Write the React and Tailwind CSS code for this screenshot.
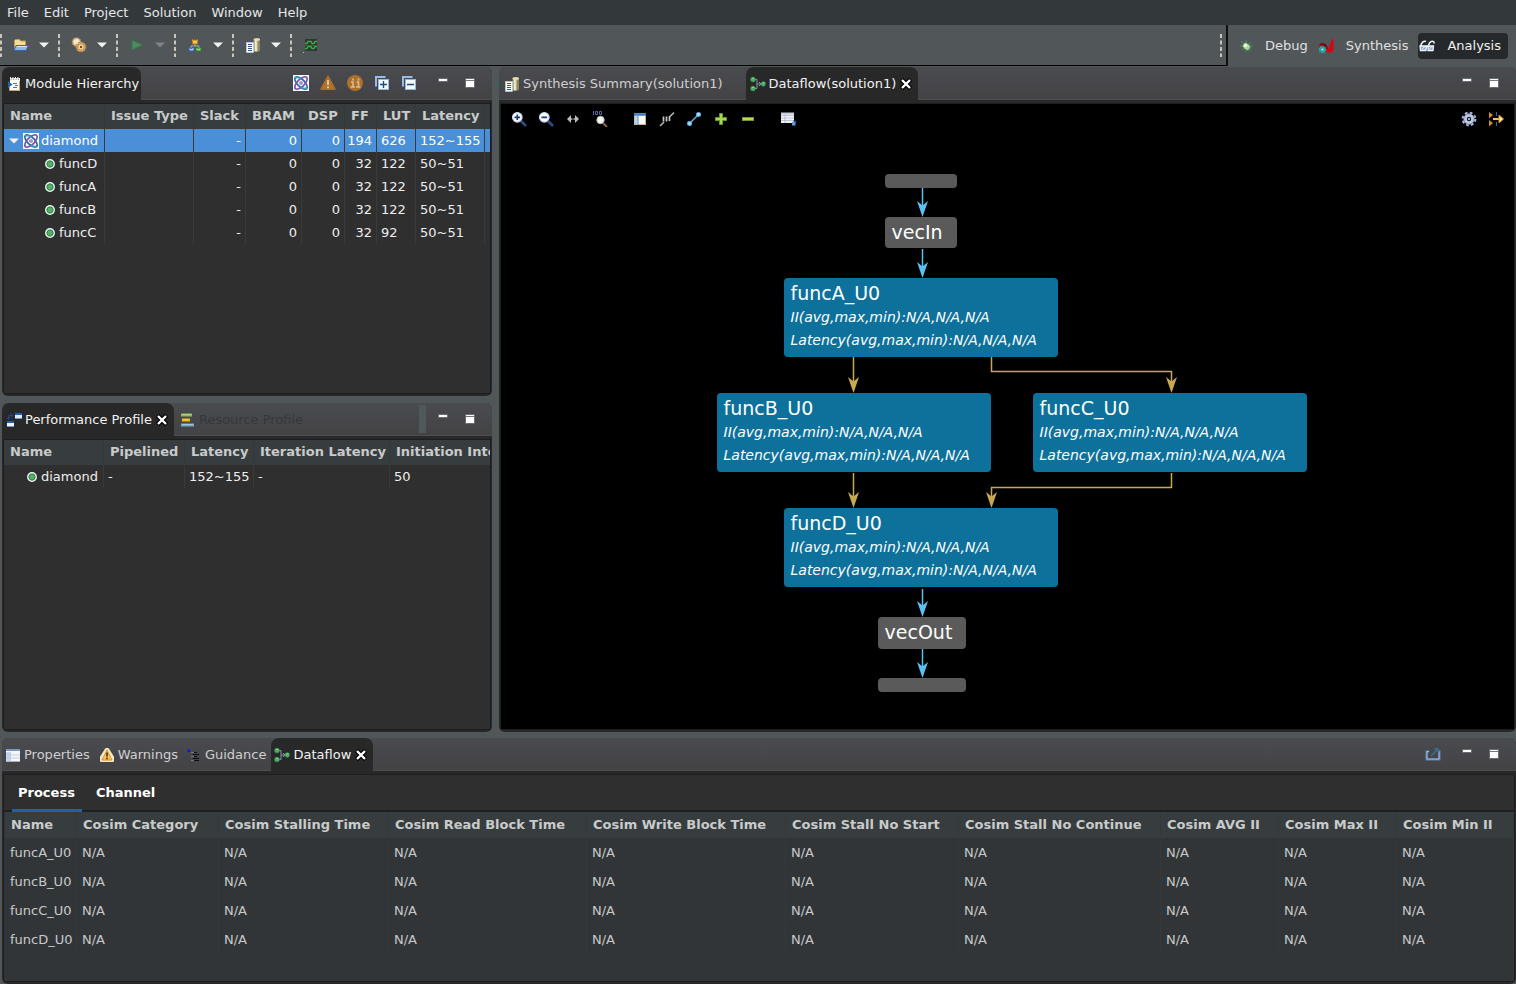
import React from "react";

/* ---------- icons ---------- */

function Svg({ children, className = "" }) {
  return (
    <svg viewBox="0 0 16 16" className={"block size-4 shrink-0 " + className} aria-hidden="true">
      {children}
    </svg>
  );
}

const FolderIcon = () => (
  <Svg>
    <path d="M1.500 12.500V3.500l1-1h4l1 1.500h5v4" fill="#f5dc9a" stroke="#c89a4a" />
    <path d="M3 8.500h12.500l-2.500 5H1z" fill="#8db4ec" stroke="#3b62b0" />
    <path d="M4 9.500h9.500" stroke="#dbe8fb" />
  </Svg>
);
const GearsIcon = () => (
  <Svg>
    <circle cx="5.500" cy="5" r="4" fill="#e8cfa0" stroke="#c89a68" strokeWidth="1.600" strokeDasharray="1.400 1" />
    <circle cx="5.500" cy="5" r="2.800" fill="#f7ead0" />
    <circle cx="10" cy="10" r="4.600" fill="#e8c080" stroke="#c08a40" strokeWidth="1.800" strokeDasharray="1.500 1.100" />
    <circle cx="10" cy="10" r="3.200" fill="#f3dcae" stroke="#a87030" strokeWidth=".7" />
    <circle cx="10" cy="10" r="1.200" fill="#6a4a20" />
  </Svg>
);
const PlayIcon = () => (
  <Svg>
    <path d="M3 3l10.500 5L3 13z" fill="#4b8b5c" stroke="#3c744b" />
  </Svg>
);
const TreeIcon = () => (
  <Svg>
    <path d="M8 6v3M4 11V9h8v2" stroke="#a8aeb5" fill="none" />
    <rect x="5.500" y="3.500" width="5" height="3.500" fill="#f5c860" stroke="#b07818" />
    <path d="M5 2l2 1.500L8 2l1 1.500L11 2v2H5z" fill="#e09a20" />
    <path d="M2 10l2 1.500L7 10v4H2z" fill="#a8c8f5" stroke="#315aa0" />
    <path d="M9 10l2.500 1.500L14 10v4H9z" fill="#8fdc7c" stroke="#2b7b2b" />
  </Svg>
);
const ReportIcon = () => (
  <Svg>
    <path d="M8.500 2.500c0-2 6.500-2 6.500 0v11c0 1.500-6.500 1.500-6.500 0z" fill="#8c875e" />
    <path d="M9.500 2.500h3v12h-3z" fill="#d9d5ae" />
    <path d="M10.300 3h1v11h-1z" fill="#f6f4e0" />
    <ellipse cx="11.750" cy="2.500" rx="3.250" ry="1.300" fill="#e3dfbd" />
    <rect x="1.500" y="5.500" width="7" height="10" fill="#fff" stroke="#c5d3e0" strokeWidth=".6" />
    <path d="M3 7.500h4M3 9.500h4M3 11.500h4M3 13.500h4" stroke="#235a9c" />
  </Svg>
);
const WaveIcon = () => (
  <Svg>
    <rect x="2" y="2" width="12" height="12" fill="#303633" />
    <path d="M2 6.500h2l1-2h3l1 2h2l1-2h2M2 11.500h2l1-2h3l1 2h2l1-2h2" fill="none" stroke="#2fb545" strokeWidth="1.300" />
    <path d="M2 8.500h12" stroke="#1f6e33" />
    <path d="M0 15.500h1" stroke="#b5b5b5" />
  </Svg>
);
const BugIcon = () => (
  <Svg>
    <path d="M3 3l10 10M13 4L4 12M1.500 8h13M8 2v12" stroke="#3d8d78" strokeWidth="1" />
    <ellipse cx="8.500" cy="8.500" rx="4.200" ry="3.300" transform="rotate(40 8.500 8.500)" fill="#b4d88a" stroke="#3b7660" strokeWidth=".8" />
    <circle cx="7.500" cy="7.500" r="1.700" fill="#eef7d8" />
  </Svg>
);
const SynthesisIcon = () => (
  <Svg>
    <path d="M1 8c1-4 6-4 9 2 2-1 2-7 5.500-10v12.500c-2 3-6 2.500-8 .5-1-4-4-5-6.500-5z" fill="#d00a12" />
    <path d="M1 8c1-4 6-4 8 0l1 3-3-1c-1-2-4-3-6-2z" fill="#750b12" />
    <circle cx="4.500" cy="11.500" r="3" fill="#189fa0" stroke="#27b5b5" strokeWidth="1.600" strokeDasharray="1.300 1" />
    <circle cx="4.500" cy="11.500" r="1.100" fill="#c8f5ef" />
  </Svg>
);
const GlassesIcon = () => (
  <Svg>
    <path d="M1.500 8.500C2.500 4 5 2.500 7 3.500M9.500 7.500c1-4 3.500-5 5.500-3.500v1.500M7 9c1-1 1.500-1 2 0" fill="none" stroke="#f2f6fb" strokeWidth="1.500" />
    <path d="M1 8h6.500L7 12.500H1.500zM9 8h5.500L14 12.500H9z" fill="#86a7d8" stroke="#f5f8fc" strokeWidth="1.300" />
    <path d="M3 11l3-2.500M10.500 11l2.500-2.500" stroke="#e7effb" />
  </Svg>
);
const NotesIcon = () => (
  <Svg>
    <rect x="4" y="2" width="10" height="13" fill="#f9f9f5" />
    <path d="M3.500 8v6.500h10V5" fill="none" stroke="#c8a76a" />
    <path d="M4.500 3h9" stroke="#343b44" strokeDasharray="1 1.500" />
    <path d="M4.500 1v2M7 1v2M9.500 1v2M12 1v2" stroke="#f4f4f4" />
    <path d="M7 7.500h4M9 9.500h3M7 11.500h4" stroke="#4b74ad" />
    <path d="M2 5l4.500 3.500L2 12z" fill="#2464a8" />
  </Svg>
);
const AtomIcon = () => (
  <Svg>
    <rect width="16" height="16" fill="#fbfbff" />
    <g fill="none" strokeWidth="1.700">
      <ellipse cx="8" cy="8" rx="8" ry="3.600" transform="rotate(45 8 8)" stroke="#2868ac" />
      <ellipse cx="8" cy="8" rx="8" ry="3.600" transform="rotate(-45 8 8)" stroke="#7651ae" />
      <path d="M2.500 3.500C3 1.500 6 2.500 8 4.500M13.500 12.500c-.5 2-3.500 1-5.500-1" stroke="#38a4b5" />
    </g>
    <circle cx="8" cy="8" r="1.800" fill="#7b55b8" />
    <circle cx="8" cy="8" r=".7" fill="#fff" />
  </Svg>
);
const OrangeWarnIcon = () => (
  <Svg>
    <path d="M8 1.200l7 13H1z" fill="#b3742a" stroke="#a96d26" strokeWidth="1.500" strokeLinejoin="round" />
    <path d="M8 5v5M8 11.200v2" stroke="#dcc9b2" strokeWidth="1.800" />
  </Svg>
);
const OrangeInfoIcon = () => (
  <Svg>
    <circle cx="8" cy="8" r="8" fill="#ae7029" />
    <path d="M4 7h2v5M9.500 7h2v5M3.500 12h4.500M9 12h4.500M6 3.500v2M11.500 3.500v2" stroke="#d5bb9a" strokeWidth="1.600" fill="none" />
  </Svg>
);
const BoxIcon = ({ plus }) => (
  <Svg>
    <path d="M2 11.500v-9.500h9.500" fill="none" stroke="#9abbe5" strokeWidth="2" />
    <rect x="4.500" y="4.500" width="10" height="10" fill="#f5faff" stroke="#8fb5e3" />
    <path d={plus ? "M6 9.500h7M9.500 6v7" : "M6 9.500h7"} stroke="#19477f" strokeWidth="1.400" />
  </Svg>
);
const MinIcon = () => (
  <Svg>
    <rect x="3.500" y="3.500" width="9" height="3" fill="#fff" stroke="#6b6b6d" />
  </Svg>
);
const MaxIcon = () => (
  <Svg>
    <rect x="3.500" y="3.500" width="9" height="9" fill="#fff" stroke="#6b6b6d" />
    <path d="M4 5.500h8" stroke="#77777a" />
  </Svg>
);
const PerfIcon = () => (
  <Svg>
    <path d="M2.500 7V3.500h4M5 1.500l2 2-2 2M1 5.500l1.500 2 1.500-2" fill="none" stroke="#1c489b" />
    <rect x="9" y="1" width="7" height="6" fill="#dceafa" />
    <rect x="9" y="1" width="7" height="2" fill="#245fb5" />
    <rect x="1" y="9" width="7" height="6" fill="#eef5fc" />
    <rect x="1" y="9" width="7" height="2" fill="#245fb5" />
    <path d="M9 6.500h7M1 14.500h7" stroke="#7299c8" />
  </Svg>
);
const ResourceIcon = () => (
  <Svg>
    <path d="M1 3h11" stroke="#91ba58" strokeWidth="3" />
    <path d="M2 8h8" stroke="#f2b318" strokeWidth="3" />
    <path d="M1 13h13" stroke="#76a6d0" strokeWidth="3" />
    <path d="M2 2.500h9M3 7.500h6M2 12.500h11" stroke="#d7dfc8" strokeOpacity=".5" />
  </Svg>
);
const FlowIcon = () => (
  <Svg>
    <path d="M4 3.500h3v9H4M7 8h4" fill="none" stroke="#8793a5" />
    <path d="M9 6l2 2-2 2" fill="none" stroke="#aab8c8" strokeWidth=".8" />
    <g fill="#4fae65" stroke="#2f8046" strokeWidth=".5">
      <circle cx="3" cy="3.500" r="2.500" />
      <circle cx="3" cy="12.500" r="2.500" />
      <circle cx="13.300" cy="8" r="2.400" />
    </g>
    <path d="M2 2.500h2M2 11.500h2M12.500 7h2" stroke="#8bd19a" />
  </Svg>
);
const PropsIcon = () => (
  <Svg>
    <rect x="1" y="2" width="14" height="12.500" fill="#f3f6fa" />
    <path d="M1 3h14" stroke="#7d97c2" strokeWidth="2" />
    <path d="M1 5h4v9.500H1z" fill="#c6d8ee" />
    <path d="M1 8h14M1 11h14M5.500 5v9M1 14.500h14" stroke="#a9bbd4" strokeWidth=".6" />
  </Svg>
);
const WarningIcon = () => (
  <Svg>
    <path d="M7 2h2l5 8v4H2v-4z" fill="#fffdf5" stroke="#f6e6c2" strokeWidth="2" strokeLinejoin="round" />
    <path d="M8 3l5 10H3z" fill="#f8c35a" stroke="#d78a1c" strokeLinejoin="round" />
    <path d="M8 5.500v4M8 10.500v1.700" stroke="#42301b" strokeWidth="1.600" />
  </Svg>
);
const GuidanceIcon = () => (
  <Svg>
    <path d="M1 3.500h1.500V2H4v3H1z" fill="#1414e8" />
    <path d="M5.500 5v10" stroke="#555" strokeDasharray="1 1" />
    <path d="M5 5.500h6M7 7.500h6M6 9.500h5M7 11.500h6M6 13.500h7" stroke="#0c0c0c" strokeWidth="1.200" />
    <path d="M5 5.500h3M5 9.500h3M5 13.500h3" stroke="#777" />
  </Svg>
);
const ZoomIcon = ({ plus }) => (
  <Svg>
    <path d="M10 10l5 5" stroke="#2d4d82" strokeWidth="2.600" />
    <circle cx="6.300" cy="6.300" r="4.700" fill="#fff" stroke="#c9d8f0" strokeWidth="1.400" />
    <path d={plus ? "M3.500 6.300h5.600M6.300 3.500v5.600" : "M3.500 6.300h5.600"} stroke="#153a74" strokeWidth="1.700" />
  </Svg>
);
const FitWidthIcon = () => (
  <Svg>
    <path d="M2 8l4-4v8zM14 8l-4-4v8z" fill="#bcbcbc" />
    <path d="M5 8h2.500M8.500 8H11" stroke="#bcbcbc" strokeWidth="1.500" />
  </Svg>
);
const Zoom100Icon = () => (
  <Svg>
    <path d="M1.500 0v4M3.500 .5h2v3h-2zM7.500 .5h2v3h-2z" fill="none" stroke="#4c6b9b" />
    <circle cx="8.500" cy="9" r="3.700" fill="#f5f5ef" stroke="#bbb" />
    <path d="M11 12l4 4" stroke="#8f6350" strokeWidth="2" />
  </Svg>
);
const LayoutIcon = () => (
  <Svg>
    <rect x="2.500" y="2.500" width="11" height="11" fill="#f8fbff" stroke="#c9b580" />
    <path d="M2 3.500h12" stroke="#3b7dca" strokeWidth="2.500" />
    <path d="M2.500 5h3v8h-3z" fill="#b7d2f0" />
    <path d="M6 5v9" stroke="#5187bd" />
  </Svg>
);
const SlashBarsIcon = () => (
  <Svg>
    <path d="M1 15l4-4M11 5.500l4-4" stroke="#b9b9b9" strokeWidth="1.500" />
    <path d="M4.500 5.500v5M7.500 5.500v5M10.500 5v5" stroke="#c7c7c7" strokeWidth="1.700" />
  </Svg>
);
const ConnectIcon = () => (
  <Svg>
    <path d="M4 12l8-8" stroke="#63b3e5" strokeWidth="1.500" />
    <g fill="#b9e0f8" stroke="#56a9df" strokeWidth="1.200">
      <circle cx="3.500" cy="12.500" r="2" />
      <circle cx="12.500" cy="3.500" r="2" />
    </g>
  </Svg>
);
const PlusIcon = () => (
  <Svg>
    <path d="M6.500 2.500h3v4h4v3h-4v4h-3v-4h-4v-3h4z" fill="#a5d84b" stroke="#62952a" />
  </Svg>
);
const MinusIcon = () => (
  <Svg>
    <rect x="2.500" y="6.500" width="11" height="3" fill="#b9dc4d" stroke="#789630" />
  </Svg>
);
const TableIcon = () => (
  <Svg>
    <rect x="1" y="2" width="13" height="10" fill="#f0f1f5" />
    <path d="M1 4.500h13M1 7h13M1 9.500h13M5 2v10" stroke="#b3bacb" strokeWidth=".8" />
    <rect x="1" y="1.500" width="13" height="2" fill="#c9ccd8" />
    <rect x="12" y="11" width="3.500" height="3.500" fill="#5c9bde" />
    <path d="M13 10h2.500v2" fill="none" stroke="#2f5f9c" />
  </Svg>
);
const CogIcon = () => (
  <Svg>
    <circle cx="8" cy="8" r="6.300" fill="none" stroke="#a5b5d6" strokeWidth="2.200" strokeDasharray="2.700 2.250" />
    <circle cx="8" cy="8" r="5.200" fill="#bccae5" stroke="#8093b8" strokeWidth=".8" />
    <circle cx="8" cy="8" r="2.200" fill="#15181e" />
    <path d="M7 8h2M8 7v2" stroke="#d4def0" />
  </Svg>
);
const MergeIcon = () => (
  <Svg>
    <path d="M1 1l4 3-4 3.500zM1 9l4 3-4 3.500z" fill="#d88a24" />
    <path d="M8.500 1v4M8.500 11v4" stroke="#49638b" />
    <path d="M5 8h7" stroke="#f4c16b" strokeWidth="2" />
    <path d="M11 4l4.500 4-4.500 4z" fill="#fff0c2" stroke="#d98b22" />
  </Svg>
);
const ExportIcon = () => (
  <Svg>
    <path d="M4 5.500H1.500v8h13v-8H13" fill="none" stroke="#5f83bd" strokeWidth="2" />
    <path d="M4 5.500H2v7.500h12V5.500" fill="none" stroke="#b2cbee" strokeWidth=".8" />
    <path d="M6 10l6-6M9.500 3h3.500v3.500" fill="none" stroke="#39709b" strokeWidth="1.400" />
  </Svg>
);
const CloseIcon = () => (
  <svg viewBox="0 0 12 12" className="block size-3" aria-hidden="true">
    <path d="M1.500 1.500l9 9M10.500 1.500l-9 9" stroke="#000" strokeWidth="4.500" />
    <path d="M2 2l8 8M10 2l-8 8" stroke="#fff" strokeWidth="2.400" />
  </svg>
);
const Caret = ({ dim }) => (
  <svg viewBox="0 0 10 6" className="block h-[6px] w-[10px] shrink-0" aria-hidden="true">
    <path d="M0 .5h10L5 5.500z" fill={dim ? "#7f8385" : "#f2f2f2"} />
  </svg>
);
const Dot = () => (
  <svg viewBox="0 0 10 10" className="block size-[10px] shrink-0" aria-hidden="true">
    <circle cx="5" cy="5" r="4.200" fill="#58ad6c" stroke="#f2f7f2" strokeWidth="1.500" />
    <circle cx="5" cy="5" r="3.100" fill="none" stroke="#2a7a41" strokeWidth=".8" />
  </svg>
);

/* ---------- shared pieces ---------- */

function Handle() {
  return (
    <svg viewBox="0 0 2 24" className="block h-6 w-[2px] shrink-0" aria-hidden="true">
      <path d="M1 1v23" stroke="#c9c5bd" strokeWidth="2" strokeDasharray="4 2.500" />
    </svg>
  );
}

function IconButton({ label, children, className = "" }) {
  return (
    <button type="button" aria-label={label} className={"shrink-0 " + className}>
      {children}
    </button>
  );
}

function Panel({ tabs, actions, children, className = "" }) {
  return (
    <section className={"flex min-h-0 min-w-0 flex-col overflow-hidden rounded-md bg-[#282828] " + className}>
      <header className="flex h-[33px] shrink-0 items-stretch border-b border-[#4d4d4f] bg-linear-to-b from-[#4a4b4f] to-[#434346]">
        {tabs}
        <div className="ml-auto flex items-center gap-[11px] pr-[14px]">{actions}</div>
      </header>
      <div className="mx-px mt-[3px] mb-[2px] flex min-h-0 flex-1 flex-col overflow-hidden border border-[#1c1e1f] bg-[#2f2f2f]">
        {children}
      </div>
    </section>
  );
}

function Tab({ icon, label, active, close, className = "" }) {
  return (
    <div
      className={
        "flex shrink-0 items-center whitespace-nowrap " +
        (active ? "-mb-px rounded-t-lg bg-[#282828] text-[#f2f2f2] " : "pt-px text-[#cfcfcf] ") +
        className
      }
    >
      <button type="button" className="flex items-center gap-[3px]">
        {icon}
        {label}
      </button>
      {close && (
        <IconButton label={"Close " + label} className="ml-1">
          <CloseIcon />
        </IconButton>
      )}
    </div>
  );
}

const WindowButtons = ({ className = "" }) => (
  <div className={"flex gap-[11px] " + className}>
    <IconButton label="Minimize"><MinIcon /></IconButton>
    <IconButton label="Maximize"><MaxIcon /></IconButton>
  </div>
);

/* ---------- top bars ---------- */

function MenuBar() {
  return (
    <nav className="flex h-[25px] shrink-0 items-center gap-[15px] bg-[#33393b] px-[7px] text-[#e6e6e6]">
      {["File", "Edit", "Project", "Solution", "Window", "Help"].map((m) => (
        <button type="button" key={m}>{m}</button>
      ))}
    </nav>
  );
}

const TOOLS = [
  ["Open project", <FolderIcon />],
  ["Settings", <GearsIcon />],
  ["Run", <PlayIcon />, true],
  ["Hierarchy", <TreeIcon />],
  ["Reports", <ReportIcon />],
];

function ToolBar() {
  return (
    <div className="flex h-[41px] shrink-0 bg-[#515658]">
      <div className="flex flex-1 items-center border-b border-black">
        {TOOLS.map(([label, icon, dim]) => (
          <div key={label} className="flex w-[58px] items-center">
            <Handle />
            <IconButton label={label} className="ml-[11px]">{icon}</IconButton>
            <IconButton label={label + " options"} className="ml-[10px]"><Caret dim={dim} /></IconButton>
          </div>
        ))}
        <Handle />
        <IconButton label="Waveform" className="ml-[11px]"><WaveIcon /></IconButton>
        <div className="mr-1 ml-auto"><Handle /></div>
      </div>
      <div className="flex items-center border-l-2 border-[#101010] pr-2 text-[#e0e0e0]">
        <button type="button" className="ml-[10px] flex items-center gap-[11px]"><BugIcon />Debug</button>
        <button type="button" className="ml-[10px] flex items-center gap-[12px]"><SynthesisIcon />Synthesis</button>
        <button type="button" className="ml-[10px] flex h-[26px] items-center gap-[12px] rounded bg-[#26292b] pr-[7px] pl-px text-[#f0f0f0]">
          <GlassesIcon />Analysis
        </button>
      </div>
    </div>
  );
}

/* ---------- left tables ---------- */

const th = "overflow-hidden border-r border-[#33393a] bg-[#373d3f] pl-[6px] text-left font-bold whitespace-nowrap text-[#c9cbcb] ";

const MODULES = [
  ["diamond", "0", "0", "194", "626", "152~155"],
  ["funcD", "0", "0", "32", "122", "50~51"],
  ["funcA", "0", "0", "32", "122", "50~51"],
  ["funcB", "0", "0", "32", "122", "50~51"],
  ["funcC", "0", "0", "32", "92", "50~51"],
];

function ModuleTable() {
  return (
    <table className="w-full table-fixed border-separate border-spacing-0 text-[#eeeeee]">
      <colgroup>
        <col className="w-[101px]" /><col className="w-[89px]" /><col className="w-[52px]" />
        <col className="w-[56px]" /><col className="w-[43px]" /><col className="w-[32px]" />
        <col className="w-[39px]" /><col className="w-[69px]" /><col />
      </colgroup>
      <thead>
        <tr>
          {["Name", "Issue Type", "Slack", "BRAM", "DSP", "FF", "LUT", "Latency", ""].map((h) => (
            <th key={h} className={th + "h-[25px] pb-[2px]"}>{h}</th>
          ))}
        </tr>
      </thead>
      <tbody>
        {MODULES.map(([name, bram, dsp, ff, lut, lat], i) => {
          const td = "h-[23px] whitespace-nowrap border-r border-[#383b3c] ";
          const num = td + "pr-1 text-right";
          return (
            <tr key={name} className={i === 0 ? "bg-[#4a90d9] text-white" : ""}>
              <td className={td}>
                {i === 0 ? (
                  <div className="flex items-center pl-[5px]">
                    <Caret /><span className="ml-1"><AtomIcon /></span><span className="ml-[2px]">{name}</span>
                  </div>
                ) : (
                  <div className="flex items-center gap-1 pl-[41px]"><Dot />{name}</div>
                )}
              </td>
              <td className={td} />
              <td className={num}>-</td>
              <td className={num}>{bram}</td>
              <td className={num}>{dsp}</td>
              <td className={num}>{ff}</td>
              <td className={td + "pl-1"}>{lut}</td>
              <td className={td + "pl-1"}>{lat}</td>
              <td />
            </tr>
          );
        })}
      </tbody>
    </table>
  );
}

function ProfileTable() {
  const td = "h-[23px] whitespace-nowrap border-r border-[#383b3c] pl-1";
  return (
    <table className="w-full table-fixed border-separate border-spacing-0 text-[#eeeeee]">
      <colgroup>
        <col className="w-[100px]" /><col className="w-[81px]" /><col className="w-[69px]" />
        <col className="w-[136px]" /><col />
      </colgroup>
      <thead>
        <tr>
          {["Name", "Pipelined", "Latency", "Iteration Latency", "Initiation Interval"].map((h) => (
            <th key={h} className={th + "h-[25px] pb-px last:border-r-0"}>{h}</th>
          ))}
        </tr>
      </thead>
      <tbody>
        <tr>
          <td className={td}><div className="flex items-center gap-1 pl-[19px]"><Dot />diamond</div></td>
          <td className={td}>-</td>
          <td className={td}>152~155</td>
          <td className={td}>-</td>
          <td className="pl-1">50</td>
        </tr>
      </tbody>
    </table>
  );
}

/* ---------- dataflow graph ---------- */

const PROCESSES = [
  ["funcA_U0", "left-[67px] top-[104px]"],
  ["funcB_U0", "left-0 top-[219px]"],
  ["funcC_U0", "left-[316px] top-[219px]"],
  ["funcD_U0", "left-[67px] top-[334px]"],
];

const BLUE = [[205.5, 14, 43], [205.5, 75, 104], [205.5, 415, 443], [205.5, 475, 504]];
const GOLD = [
  ["M136.500 183V210", 136.5, 219],
  ["M274.500 183V197.500H454.500V210", 454.5, 219],
  ["M136.500 299V325", 136.5, 334],
  ["M454.500 299V313.500H274.500V325", 274.5, 334],
];
const head = (x, y) => `M${x} ${y}l-5.500-16 5.500 4.500 5.500-4.500z`;

function Graph() {
  return (
    <div className="relative h-[518px] w-[590px] shrink-0 text-white">
      <svg viewBox="0 0 590 518" className="absolute inset-0 size-full" fill="none" aria-hidden="true">
        {BLUE.map(([x, a, b]) => (
          <g key={a}>
            <path d={`M${x} ${a}V${b - 9}`} stroke="#5cc1f0" strokeWidth="1.500" />
            <path d={head(x, b)} fill="#5cc1f0" />
          </g>
        ))}
        {GOLD.map(([d, x, y]) => (
          <g key={d}>
            <path d={d} stroke="#c8a850" strokeWidth="1.500" />
            <path d={head(x, y)} fill="#c8a850" />
          </g>
        ))}
      </svg>
      <div className="absolute top-0 left-[168px] h-[14px] w-[72px] rounded bg-[#5a5a5a]" />
      <div className="absolute top-[43px] left-[168px] h-[31px] w-[72px] rounded bg-[#5a5a5a] pl-[7px] text-[19px] leading-[31px]">vecIn</div>
      {PROCESSES.map(([name, pos]) => (
        <div key={name} className={"absolute h-[79px] w-[274px] rounded bg-[#0d719c] px-[7px] pt-[3px] whitespace-nowrap " + pos}>
          <div className="text-[19px] leading-[25px]">{name}</div>
          <div className="text-[14px] leading-[23px] italic">II(avg,max,min):N/A,N/A,N/A</div>
          <div className="text-[14px] leading-[23px] italic">Latency(avg,max,min):N/A,N/A,N/A</div>
        </div>
      ))}
      <div className="absolute top-[443px] left-[161px] h-[32px] w-[88px] rounded bg-[#5a5a5a] pl-[7px] text-[19px] leading-[31px]">vecOut</div>
      <div className="absolute top-[504px] left-[161px] h-[14px] w-[88px] rounded bg-[#5a5a5a]" />
    </div>
  );
}

function GraphToolbar() {
  return (
    <div className="flex h-[30px] shrink-0 items-center gap-[11px] pr-[10px] pl-[10px]">
      <IconButton label="Zoom in"><ZoomIcon plus /></IconButton>
      <IconButton label="Zoom out"><ZoomIcon /></IconButton>
      <IconButton label="Fit width"><FitWidthIcon /></IconButton>
      <IconButton label="Zoom to 100%"><Zoom100Icon /></IconButton>
      <IconButton label="Layout" className="ml-[13px]"><LayoutIcon /></IconButton>
      <IconButton label="Show channels"><SlashBarsIcon /></IconButton>
      <IconButton label="Connect"><ConnectIcon /></IconButton>
      <IconButton label="Expand"><PlusIcon /></IconButton>
      <IconButton label="Collapse"><MinusIcon /></IconButton>
      <IconButton label="Show table" className="ml-[13px]"><TableIcon /></IconButton>
      <IconButton label="Graph settings" className="ml-auto"><CogIcon /></IconButton>
      <IconButton label="Go to"><MergeIcon /></IconButton>
    </div>
  );
}

/* ---------- bottom table ---------- */

const COSIM = ["Name", "Cosim Category", "Cosim Stalling Time", "Cosim Read Block Time", "Cosim Write Block Time",
  "Cosim Stall No Start", "Cosim Stall No Continue", "Cosim AVG II", "Cosim Max II", "Cosim Min II"];

function CosimTable() {
  return (
    <table className="w-full table-fixed border-separate border-spacing-0 text-[#c8caca]">
      <colgroup>
        <col className="w-[72px]" /><col className="w-[142px]" /><col className="w-[170px]" />
        <col className="w-[198px]" /><col className="w-[199px]" /><col className="w-[173px]" />
        <col className="w-[202px]" /><col className="w-[118px]" /><col className="w-[118px]" /><col />
      </colgroup>
      <thead>
        <tr>{COSIM.map((h) => <th key={h} className={th + "h-[26px]"}>{h}</th>)}</tr>
      </thead>
      <tbody>
        {["funcA_U0", "funcB_U0", "funcC_U0", "funcD_U0"].map((name) => (
          <tr key={name}>
            {COSIM.map((h, i) => (
              <td key={h} className="h-[29px] border-r border-[#35393b] pl-[5px] whitespace-nowrap">
                {i === 0 ? name : "N/A"}
              </td>
            ))}
          </tr>
        ))}
      </tbody>
    </table>
  );
}

/* ---------- page ---------- */

export default function App() {
  return (
    <div className="flex h-screen flex-col bg-[#515658] font-['DejaVu_Sans',sans-serif] text-[13px] leading-4">
      <MenuBar />
      <ToolBar />
      <main className="flex min-h-0 flex-1 flex-col gap-[6px] pt-px pl-[2px]">
        <div className="flex min-h-0 flex-1 gap-[7px]">
          <div className="flex w-[490px] shrink-0 flex-col gap-[7px]">
            <Panel
              className="flex-1"
              tabs={<Tab active icon={<NotesIcon />} label="Module Hierarchy" className="pr-[2px] pl-[4px]" />}
              actions={
                <>
                  <IconButton label="Modules"><AtomIcon /></IconButton>
                  <IconButton label="Warnings"><OrangeWarnIcon /></IconButton>
                  <IconButton label="Initiation interval"><OrangeInfoIcon /></IconButton>
                  <IconButton label="Expand all"><BoxIcon plus /></IconButton>
                  <IconButton label="Collapse all"><BoxIcon /></IconButton>
                  <WindowButtons className="ml-[7px]" />
                </>
              }
            >
              <ModuleTable />
            </Panel>
            <Panel
              className="flex-1"
              tabs={
                <>
                  <Tab active close icon={<PerfIcon />} label="Performance Profile" className="pr-[6px] pl-[4px]" />
                  <Tab icon={<ResourceIcon />} label="Resource Profile" className="pl-[6px] text-[#34393b]!" />
                </>
              }
              actions={
                <>
                  <span className="h-7 w-[7px] bg-[#50585b]" />
                  <WindowButtons className="-ml-[2px]" />
                </>
              }
            >
              <ProfileTable />
            </Panel>
          </div>
          <Panel
            className="flex-1"
            tabs={
              <>
                <Tab icon={<ReportIcon />} label="Synthesis Summary(solution1)" className="pr-[23px] pl-[5px]" />
                <Tab active close icon={<FlowIcon />} label="Dataflow(solution1)" className="pr-[6px] pl-[4px]" />
              </>
            }
            actions={<WindowButtons />}
          >
            <div className="flex min-h-0 flex-1 flex-col overflow-hidden bg-black">
              <GraphToolbar />
              <div className="flex flex-1 justify-center pt-10 pl-[8px]">
                <Graph />
              </div>
            </div>
          </Panel>
        </div>
        <Panel
          className="h-[246px] shrink-0"
          tabs={
            <>
              <Tab icon={<PropsIcon />} label="Properties" className="pl-[3px]" />
              <Tab icon={<WarningIcon />} label="Warnings" className="pl-[9px]" />
              <Tab icon={<GuidanceIcon />} label="Guidance" className="pr-[5px] pl-[8px]" />
              <Tab active close icon={<FlowIcon />} label="Dataflow" className="pr-[6px] pl-[3px]" />
            </>
          }
          actions={
            <>
              <IconButton label="Export"><ExportIcon /></IconButton>
              <WindowButtons className="ml-[7px]" />
            </>
          }
        >
          <div className="flex h-[37px] shrink-0 border-b-2 border-[#1e2021] pl-[8px] font-bold text-white">
            <button type="button" className="-mb-[2px] border-b-[3px] border-[#2560a3] pt-px pr-[7px] pl-[6px]">Process</button>
            <button type="button" className="px-[14px]">Channel</button>
          </div>
          <div className="flex-1 bg-[#313538] pl-px">
            <CosimTable />
          </div>
        </Panel>
      </main>
    </div>
  );
}
